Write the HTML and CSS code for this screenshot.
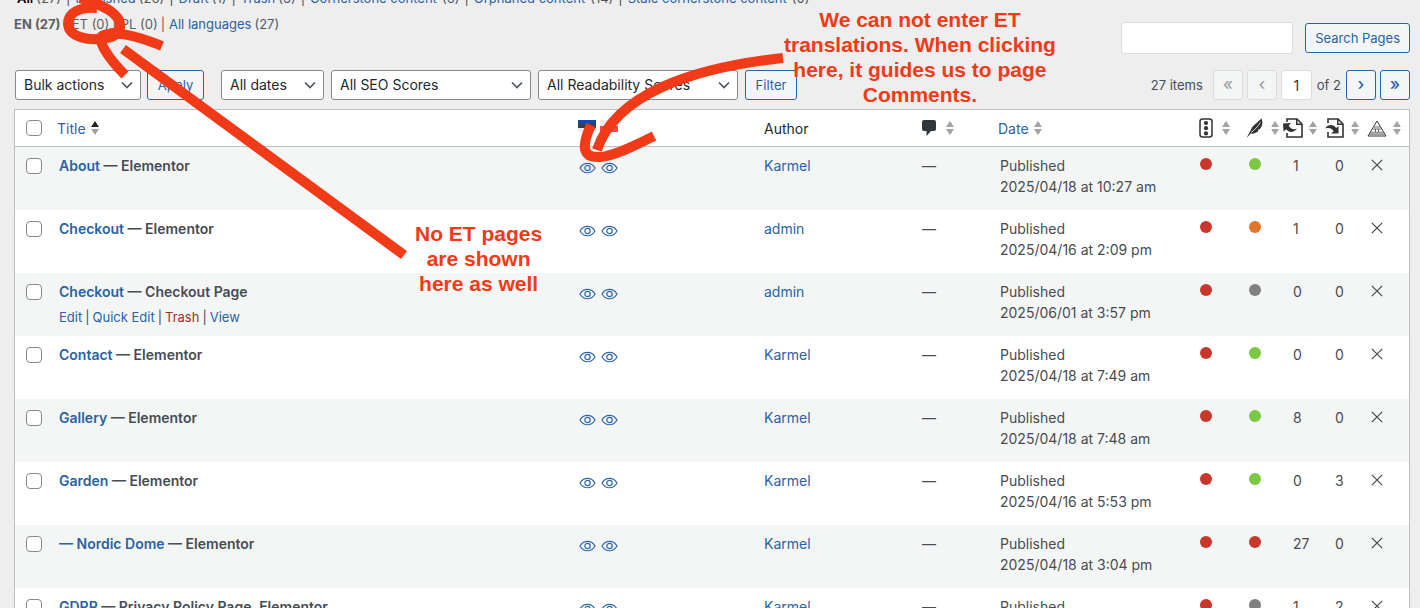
FILE: index.html
```html
<!DOCTYPE html>
<html lang="en">
<head>
<meta charset="utf-8">
<title>Pages</title>
<link rel="stylesheet" href="styles.css">
</head>
<body>
<svg class="sprite" aria-hidden="true">
  <symbol id="chev" viewBox="0 0 12 8"><path d="M1 1.5l5 5 5-5" fill="none" stroke="#50575e" stroke-width="1.7"/></symbol>
  <symbol id="sort" viewBox="0 0 8 14"><path class="up" d="M4 0l4 6H0z"/><path class="down" d="M4 14l4-6H0z"/></symbol>
  <symbol id="eye" viewBox="0 0 17 12"><path d="M1 6C4.500-.3 12.500-.3 16 6C12.500 12.300 4.500 12.300 1 6z" fill="none" stroke="#2f67ab" stroke-width="1.200"/><circle cx="8.500" cy="6" r="2.700" fill="none" stroke="#2f67ab" stroke-width="1.200"/></symbol>
  <symbol id="cross" viewBox="0 0 12 12"><path d="M.8.8l10.400 10.400M11.200.8L.8 11.200" stroke="#44484d" stroke-width="1.200"/></symbol>
</svg>
<main class="wrap">
  <header class="top">
    <div class="views">
      <nav class="line states">
        <a class="current" href="#">All</a><span class="n">(27)</span><i>|</i>
        <a href="#">Published</a><span class="n">(26)</span><i>|</i>
        <a href="#">Draft</a><span class="n">(1)</span><i>|</i>
        <a href="#">Trash</a><span class="n">(3)</span><i>|</i>
        <a href="#">Cornerstone content</a><span class="n wide">(6)</span><i>|</i>
        <a href="#">Orphaned content</a><span class="n wide">(14)</span><i>|</i>
        <a href="#">Stale cornerstone content</a><span class="n wide">(0)</span>
      </nav>
      <nav class="line langs">
        <b>EN (27)</b><i>|</i><span>ET (0)</span><i>|</i><span>PL (0)</span><i>|</i><a href="#">All languages</a><span class="n">(27)</span>
      </nav>
    </div>
    <form class="search">
      <input type="search" aria-label="Search pages">
      <button type="button" class="btn">Search Pages</button>
    </form>
  </header>

  <div class="toolbar">
    <div class="pick bulk"><select aria-label="Bulk actions"><option>Bulk actions</option></select><svg><use href="#chev"/></svg></div>
    <button type="button" class="btn apply">Apply</button>
    <div class="pick dates"><select aria-label="Dates"><option>All dates</option></select><svg><use href="#chev"/></svg></div>
    <div class="pick scores"><select aria-label="SEO scores"><option>All SEO Scores</option></select><svg><use href="#chev"/></svg></div>
    <div class="pick scores"><select aria-label="Readability scores"><option>All Readability Scores</option></select><svg><use href="#chev"/></svg></div>
    <button type="button" class="btn filter">Filter</button>
    <div class="pager">
      <span class="items">27 items</span>
      <button type="button" class="btn nav" disabled>«</button>
      <button type="button" class="btn nav" disabled>‹</button>
      <input type="text" value="1" aria-label="Current page">
      <span class="of">of 2</span>
      <button type="button" class="btn nav">›</button>
      <button type="button" class="btn nav">»</button>
    </div>
  </div>

  <table class="list">
    <colgroup><col class="c-check"><col><col class="c-lang"><col class="c-author"><col class="c-comm"><col class="c-date"><col class="c-seo"><col class="c-read"><col class="c-out"><col class="c-in"><col class="c-arch"></colgroup>
    <thead>
      <tr>
        <th><input type="checkbox" aria-label="Select all"></th>
        <th><div class="h title"><a href="#">Title</a><svg class="sort asc"><use href="#sort"/></svg></div></th>
        <th><div class="h flags">
          <svg viewBox="0 0 18 12" role="img" aria-label="Eesti"><path fill="#eee" d="M0 0h18v12H0z"/><path fill="#1747ab" d="M0 0h18v4H0z"/><path fill="#3b3e46" d="M0 4h18v4H0z"/></svg>
          <svg viewBox="0 0 18 12" role="img" aria-label="Polski"><path fill="#eee" d="M0 0h18v6H0z"/><path fill="#f1494e" d="M0 6h18v6H0z"/></svg></div></th>
        <th><div class="h author">Author</div></th>
        <th><div class="h comm"><svg class="bubble" viewBox="0 0 14 16"><path fill="#32373c" d="M2 0h10q2 0 2 2v7q0 2-2 2H9l-4.500 5V11H2q-2 0-2-2V2q0-2 2-2z"/></svg><svg class="sort"><use href="#sort"/></svg></div></th>
        <th><div class="h date"><a href="#">Date</a><svg class="sort"><use href="#sort"/></svg></div></th>
        <th><div class="h seo"><svg viewBox="0 0 14 20" class="ic-seo"><rect x="1" y="1" width="12" height="18" rx="2.500" fill="none" stroke="#333" stroke-width="1.500"/><circle cx="7" cy="5" r="2.100" fill="#333"/><circle cx="7" cy="10.200" r="2.100" fill="#333"/><circle cx="7" cy="15.400" r="2.100" fill="#333"/></svg><svg class="sort"><use href="#sort"/></svg></div></th>
        <th><div class="h read"><svg viewBox="0 0 16 20" class="ic-read"><path fill="#333" d="M0 20C1 16 3 14 4 11.500C5.500 7.500 10 5 14.500 .5C16.500 4.500 15 9 12.500 11.500L10.800 11.500L11.500 13C9.500 15 6 16 3.500 15.500C2.200 16.800 1 18.500 0 20z"/><path fill="none" stroke="#fff" stroke-width=".8" d="M4 14.500C7 12.500 11 8.500 13.300 4.500"/></svg><svg class="sort"><use href="#sort"/></svg></div></th>
        <th><div class="h out"><svg viewBox="0 0 20 20" class="ic-link"><path fill="none" stroke="#333" stroke-width="1.600" d="M4 4V1h10l5 5v13H4v-4"/><path fill="#333" d="M13 1v6h6v-1.500h-4.500V1zM0 5.500l8-.5-2.200 2.400C7.500 11 10.500 12 14 10.500C11 14.800 6 15 3.300 11.200L.500 13.500z"/></svg><svg class="sort"><use href="#sort"/></svg></div></th>
        <th><div class="h in"><svg viewBox="0 0 20 20" class="ic-link"><path fill="none" stroke="#333" stroke-width="1.600" d="M3 5V1h10l5 5v13H3v-5"/><path fill="#333" d="M12 1v6h6v-1.500h-4.500V1zM0 10.500C3 6 8.500 6 11.200 10L13.500 8V15.500H6l2.700-2.300C6.500 10 4 9.500 0 10.500z"/></svg><svg class="sort"><use href="#sort"/></svg></div></th>
        <th><div class="h arch"><svg viewBox="0 0 20 17" class="ic-arch"><path fill="#fff" stroke="#333" d="M10 1L19 16H1z"/><path fill="#aaa" stroke="#777" stroke-width=".6" d="M4.500 12h11l1.500 2.500H3z"/><path fill="none" stroke="#555" stroke-width=".9" d="M7 7h6M6 9h8M8.500 9v3M11.500 9v3"/></svg><svg class="sort"><use href="#sort"/></svg></div></th>
      </tr>
    </thead>
    <tbody>
      <tr><td><input type="checkbox" aria-label="Select About"></td><td><strong><a href="#">About</a> — Elementor</strong></td><td><div class="eyes"><svg><use href="#eye"/></svg><svg><use href="#eye"/></svg></div></td><td><a href="#">Karmel</a></td><td>—</td><td>Published<br>2025/04/18 at 10:27 am</td><td><span class="dot bad"></span></td><td><span class="dot good"></span></td><td>1</td><td>0</td><td class="x"><svg><use href="#cross"/></svg></td></tr>
      <tr><td><input type="checkbox" aria-label="Select Checkout"></td><td><strong><a href="#">Checkout</a> — Elementor</strong></td><td><div class="eyes"><svg><use href="#eye"/></svg><svg><use href="#eye"/></svg></div></td><td><a href="#">admin</a></td><td>—</td><td>Published<br>2025/04/16 at 2:09 pm</td><td><span class="dot bad"></span></td><td><span class="dot ok"></span></td><td>1</td><td>0</td><td class="x"><svg><use href="#cross"/></svg></td></tr>
      <tr><td><input type="checkbox" aria-label="Select Checkout page"></td><td><strong><a href="#">Checkout</a> — Checkout Page</strong><div class="actions"><a href="#">Edit</a><i>|</i><a href="#">Quick Edit</a><i>|</i><a class="trash" href="#">Trash</a><i>|</i><a href="#">View</a></div></td><td><div class="eyes"><svg><use href="#eye"/></svg><svg><use href="#eye"/></svg></div></td><td><a href="#">admin</a></td><td>—</td><td>Published<br>2025/06/01 at 3:57 pm</td><td><span class="dot bad"></span></td><td><span class="dot none"></span></td><td>0</td><td>0</td><td class="x"><svg><use href="#cross"/></svg></td></tr>
      <tr><td><input type="checkbox" aria-label="Select Contact"></td><td><strong><a href="#">Contact</a> — Elementor</strong></td><td><div class="eyes"><svg><use href="#eye"/></svg><svg><use href="#eye"/></svg></div></td><td><a href="#">Karmel</a></td><td>—</td><td>Published<br>2025/04/18 at 7:49 am</td><td><span class="dot bad"></span></td><td><span class="dot good"></span></td><td>0</td><td>0</td><td class="x"><svg><use href="#cross"/></svg></td></tr>
      <tr><td><input type="checkbox" aria-label="Select Gallery"></td><td><strong><a href="#">Gallery</a> — Elementor</strong></td><td><div class="eyes"><svg><use href="#eye"/></svg><svg><use href="#eye"/></svg></div></td><td><a href="#">Karmel</a></td><td>—</td><td>Published<br>2025/04/18 at 7:48 am</td><td><span class="dot bad"></span></td><td><span class="dot good"></span></td><td>8</td><td>0</td><td class="x"><svg><use href="#cross"/></svg></td></tr>
      <tr><td><input type="checkbox" aria-label="Select Garden"></td><td><strong><a href="#">Garden</a> — Elementor</strong></td><td><div class="eyes"><svg><use href="#eye"/></svg><svg><use href="#eye"/></svg></div></td><td><a href="#">Karmel</a></td><td>—</td><td>Published<br>2025/04/16 at 5:53 pm</td><td><span class="dot bad"></span></td><td><span class="dot good"></span></td><td>0</td><td>3</td><td class="x"><svg><use href="#cross"/></svg></td></tr>
      <tr><td><input type="checkbox" aria-label="Select Nordic Dome"></td><td><strong><a href="#">— Nordic Dome</a> — Elementor</strong></td><td><div class="eyes"><svg><use href="#eye"/></svg><svg><use href="#eye"/></svg></div></td><td><a href="#">Karmel</a></td><td>—</td><td>Published<br>2025/04/18 at 3:04 pm</td><td><span class="dot bad"></span></td><td><span class="dot bad"></span></td><td>27</td><td>0</td><td class="x"><svg><use href="#cross"/></svg></td></tr>
      <tr><td><input type="checkbox" aria-label="Select GDPR"></td><td><strong><a href="#">GDPR</a> — Privacy Policy Page, Elementor</strong></td><td><div class="eyes"><svg><use href="#eye"/></svg><svg><use href="#eye"/></svg></div></td><td><a href="#">Karmel</a></td><td>—</td><td>Published</td><td><span class="dot bad"></span></td><td><span class="dot none"></span></td><td>1</td><td>2</td><td class="x"><svg><use href="#cross"/></svg></td></tr>
    </tbody>
  </table>
</main>

<svg class="marks" width="800" height="270" viewBox="0 0 800 270" aria-hidden="true">
  <g fill="none" stroke="#f13a17" stroke-width="10">
    <path d="M97 8C80 7 68 12 68 24C69 38 90 41 106 38C122 36 124 23 114 14C106 6 92 2 80-2"/>
    <path d="M162 46C145 39 120 30 104 35C94 38 110 60 125 75"/>
    <path d="M101 40C108 32 116 32 122 34"/>
    <path d="M123 49L404 255"/>
    <path d="M783 58C690 68 615 95 597 150"/>
    <path d="M591 125C580 149 584 158 600 157C615 156 638 144 654 136"/>
  </g>
</svg>
<p class="note note-right">We can not enter ET<br>translations. When clicking<br>here, it guides us to page<br>Comments.</p>
<p class="note note-left">No ET pages<br>are shown<br>here as well</p>
</body>
</html>
```
FILE: styles.css
```css
* { box-sizing: border-box; }
html, body { height: 100%; }
body {
  margin: 0;
  overflow: hidden;
  position: relative;
  background: #eee;
  color: #474c52;
  font: 14px/21px Inter, "Liberation Sans", sans-serif;
}
a { color: #2a62a6; text-decoration: none; }
i { font-style: normal; }
.sprite { position: absolute; width: 0; height: 0; }

.wrap { margin: -14px 10px 0 14px; }

.top { display: flex; justify-content: space-between; align-items: flex-start; }
.line { display: flex; font-size: 13px; line-height: 25px; white-space: nowrap; }
.states { padding-left: 3px; }
.langs { margin-top: 1px; color: #5c6064; }
.line .n { margin-left: 3px; color: #50575e; }
.line .wide { margin-left: 5px; }
.line i { margin: 0 5px; }
.langs i { margin: 0 4px 0 3px; }
.current { color: #000; font-weight: 600; }

.search { display: flex; align-items: center; gap: 12px; padding-top: 36px; }
input[type="search"], .pager input {
  border: 1px solid #dcdcde;
  border-radius: 3px;
  background: #fff;
  font: inherit;
  color: #32373c;
}
input[type="search"] { width: 172px; height: 32px; }
.btn {
  height: 30px;
  padding: 0 9px;
  border: 1px solid #2a62a6;
  border-radius: 3px;
  background: #f4f6f6;
  color: #2a62a6;
  font: 13px/28px Inter, "Liberation Sans", sans-serif;
  white-space: nowrap;
}

.toolbar { display: flex; align-items: center; margin: 16px 0 9px; padding-left: 1px; }
.pick { display: grid; align-items: center; margin-right: 7px; }
.pick > * { grid-area: 1 / 1; }
.pick select {
  appearance: none;
  width: 100%;
  height: 30px;
  padding: 0 24px 0 8px;
  border: 1px solid #85888d;
  border-radius: 3px;
  background: #fff;
  color: #23282d;
  font: 14px/28px Inter, "Liberation Sans", sans-serif;
}
.pick svg { width: 12px; height: 8px; margin-right: 8px; justify-self: end; pointer-events: none; }
.bulk { width: 126px; margin-right: 6px; }
.apply { width: 57px; margin-right: 17px; }
.dates { width: 103px; }
.scores { width: 200px; }
.filter { width: 52px; }
.pager { display: flex; align-items: center; gap: 4px; margin-left: auto; }
.items { margin-right: 6px; font-size: 13px; }
.of { margin: 0 1px; font-size: 13px; }
.nav { width: 30px; padding: 0 0 3px; font-size: 17px; line-height: 24px; font-weight: 500; }
.nav:disabled { border-color: #dcdcde; color: #a0a5aa; }
.pager input { width: 31px; height: 30px; padding: 0; text-align: center; }

.list {
  width: 100%;
  table-layout: fixed;
  border: 1px solid #bcbfc2;
  border-collapse: separate;
  border-spacing: 0;
  background: #fff;
}
.c-check { width: 34px; }
.c-lang { width: 186px; }
.c-author { width: 158px; }
.c-comm { width: 78px; }
.c-date { width: 200px; }
.c-seo { width: 49px; }
.c-read { width: 44px; }
.c-out, .c-in, .c-arch { width: 42px; }
th {
  height: 37px;
  padding: 0;
  border-bottom: 1px solid #bcbfc2;
  font-weight: 400;
  text-align: left;
  color: #23282d;
}
.h { display: flex; align-items: center; }
.h svg { flex: none; }
.title, .date { padding-left: 8px; gap: 5px; }
.sort { width: 8px; height: 14px; fill: #a0a3a6; }
.asc { --up: #1d2327; }
.up { fill: var(--up, #a0a3a6); }
.flags { padding: 0 0 4px 10px; gap: 4px; }
.flags svg { width: 18px; height: 12px; }
.author { padding-left: 10px; }
.comm { padding-left: 10px; gap: 10px; }
.bubble { width: 14px; height: 16px; }
.seo { padding-left: 9px; gap: 9px; }
.ic-seo { width: 14px; height: 20px; }
.read { padding-left: 8px; gap: 8px; }
.ic-read { width: 16px; height: 20px; }
.out, .in, .arch { gap: 6px; }
.ic-link { width: 20px; height: 20px; }
.ic-arch { width: 20px; height: 17px; }

input[type="checkbox"] {
  appearance: none;
  display: block;
  width: 16px;
  height: 16px;
  margin: 0 0 0 11px;
  border: 1px solid #85888d;
  border-radius: 4px;
  background: #fff;
}
td { height: 63px; padding: 8px 0 0 10px; vertical-align: top; white-space: nowrap; }
td:first-child { padding: 11px 0 0; }
tbody tr:nth-child(odd) { background: #f4f6f5; }
strong { font-weight: 600; }
.actions { display: flex; padding-top: 4px; font-size: 13px; line-height: 22px; }
.actions i { margin: 0 3px; }
.actions .trash { color: #a52a2a; }
.eyes { display: flex; gap: 5px; padding: 7px 0 0 1px; }
.eyes svg { width: 17px; height: 12px; }
.dot { display: block; width: 12px; height: 12px; margin-top: 3px; border-radius: 50%; }
.bad { background: #c9372c; }
.good { background: #7ac943; }
.ok { background: #e2762b; }
.none { background: #808080; }
td.x { padding: 12px 0 0 4px; }
.x svg { display: block; width: 12px; height: 12px; }

/* Hand-drawn remarks lie over the page */
.marks { position: absolute; left: 0; top: 0; pointer-events: none; }
.note {
  position: absolute;
  margin: 0;
  color: #f13a17;
  font: bold 21px/25px "Liberation Sans", sans-serif;
  text-align: center;
  white-space: nowrap;
  pointer-events: none;
}
.note-right { left: 784px; top: 7px; }
.note-left { left: 415px; top: 221px; }
```
